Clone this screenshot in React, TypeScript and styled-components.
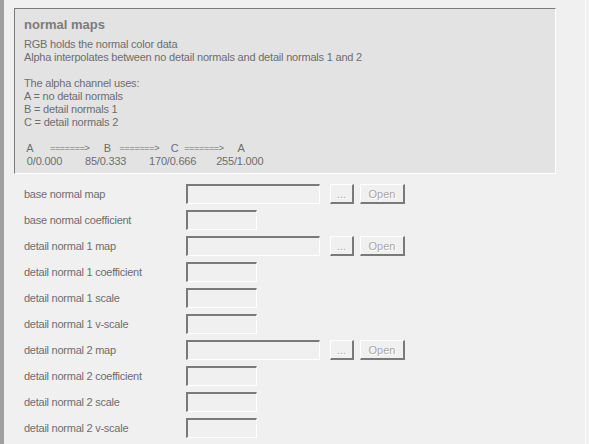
import React from "react";
import styled, { createGlobalStyle } from "styled-components";

const Global = createGlobalStyle`
  html, body { margin: 0; padding: 0; background: #f0f0f0; }
  body { font-family: "Liberation Sans", Arial, sans-serif; font-size: 11px; color: #6e6e6e; }
`;

const Page = styled.div`
  display: flex;
  width: 589px;
  height: 444px;
  overflow: hidden;
  background: #f0f0f0;
`;

const LeftStrip = styled.div`
  width: 4px;
  flex: none;
  background: #a0a0a0;
`;

const Content = styled.div`
  width: 582px;
  flex: none;
  padding: 8px 0 0 10px;
  box-sizing: border-box;
  border-right: 1px solid #fafafa;
`;

const InfoBox = styled.div`
  width: 542px;
  height: 166px;
  box-sizing: border-box;
  background: #e3e3e3;
  border-top: 1px solid #7a7a7a;
  border-left: 1px solid #7a7a7a;
  border-right: 1px solid #ffffff;
  border-bottom: 1px solid #ffffff;
  padding: 7px 0 0 9px;
`;

const Title = styled.div`
  font-weight: bold;
  font-size: 13px;
  line-height: 18px;
  color: #7c7c7c;
  margin-bottom: 4px;
`;

const Body = styled.div`
  white-space: pre;
  line-height: 13px;
  letter-spacing: -0.2px;
  color: #6e6e6e;
`;

const Arrow = styled.span`
  font-size: 9px;
  letter-spacing: -0.3px;
  vertical-align: 1px;
`;

const Form = styled.div`
  display: flex;
  flex-direction: column;
  gap: 6px;
  margin-top: 10px;
`;

const Row = styled.div`
  display: flex;
  align-items: center;
  height: 20px;
`;

const Label = styled.div`
  width: 172px;
  padding-left: 10px;
  padding-bottom: 1px;
  box-sizing: border-box;
  flex: none;
  letter-spacing: -0.25px;
  color: #6e6e6e;
`;

const Field = styled.div<{ $wide?: boolean }>`
  width: ${(p) => (p.$wide ? 134 : 71)}px;
  height: 20px;
  box-sizing: border-box;
  flex: none;
  background: #f0f0f0;
  border-top: 2px solid #7a7a7a;
  border-left: 2px solid #7a7a7a;
  border-right: 1px solid #ffffff;
  border-bottom: 1px solid #ffffff;
`;

const Button = styled.div<{ $w: number; $gap: number }>`
  width: ${(p) => p.$w}px;
  height: 20px;
  margin-left: ${(p) => p.$gap}px;
  box-sizing: border-box;
  flex: none;
  display: flex;
  align-items: center;
  justify-content: center;
  background: #f0f0f0;
  border-top: 1px solid #ffffff;
  border-left: 1px solid #ffffff;
  border-right: 2px solid #7a7a7a;
  border-bottom: 2px solid #7a7a7a;
  color: #a8a8a8;
  text-shadow: 1px 1px 0 #ffffff;
  font-size: 11px;
`;

const rows: { label: string; file?: boolean }[] = [
  { label: "base normal map", file: true },
  { label: "base normal coefficient" },
  { label: "detail normal 1 map", file: true },
  { label: "detail normal 1 coefficient" },
  { label: "detail normal 1 scale" },
  { label: "detail normal 1 v-scale" },
  { label: "detail normal 2 map", file: true },
  { label: "detail normal 2 coefficient" },
  { label: "detail normal 2 scale" },
  { label: "detail normal 2 v-scale" },
];

const bodyText = [
  "RGB holds the normal color data",
  "Alpha interpolates between no detail normals and detail normals 1 and 2",
  "",
  "The alpha channel uses:",
  "A = no detail normals",
  "B = detail normals 1",
  "C = detail normals 2",
  "",
].join("\n");

const ARROW = "=======>";

export default function App() {
  return (
    <>
      <Global />
      <Page>
        <LeftStrip />
        <Content>
          <InfoBox>
            <Title>normal maps</Title>
            <Body>
              {bodyText}
              {"\n A      "}
              <Arrow>{ARROW}</Arrow>
              {"     B   "}
              <Arrow>{ARROW}</Arrow>
              {"    C  "}
              <Arrow>{ARROW}</Arrow>
              {"     A\n"}
              {" 0/0.000        85/0.333        170/0.666       255/1.000"}
            </Body>
          </InfoBox>
          <Form>
            {rows.map((r) => (
              <Row key={r.label}>
                <Label>{r.label}</Label>
                <Field $wide={r.file} />
                {r.file && (
                  <>
                    <Button $w={24} $gap={10}>...</Button>
                    <Button $w={45} $gap={6}>Open</Button>
                  </>
                )}
              </Row>
            ))}
          </Form>
        </Content>
      </Page>
    </>
  );
}
